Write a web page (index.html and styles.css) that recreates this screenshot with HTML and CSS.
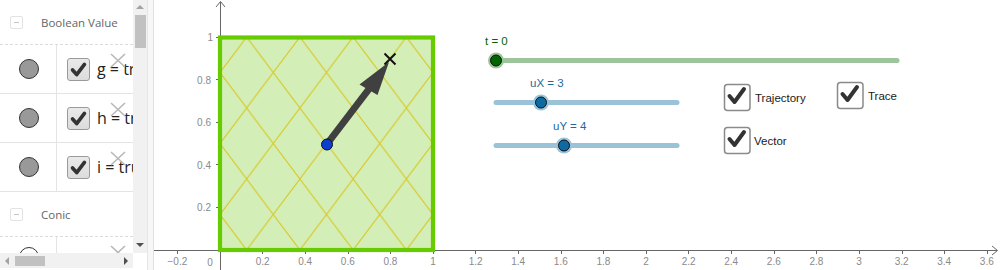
FILE: index.html
```html
<!DOCTYPE html>
<html>
<head>
<meta charset="utf-8">
<link rel="stylesheet" href="styles.css">
</head>
<body>
<div class="app">
  <div class="algebra">
    <div class="av-main">
      <div class="av-list">
        <div class="group-head"><span class="toggle"></span><span class="gname">Boolean Value</span></div>
        <div class="item">
          <div class="marble"><span class="dot"></span></div>
          <div class="def">
            <span class="cb"><svg viewBox="0 0 23 23" width="23" height="23"><path d="M5 12 L9.5 17 L18 6" fill="none" stroke="#333" stroke-width="4" stroke-linecap="round" stroke-linejoin="round"/></svg></span>
            <span class="txt">g = true</span>
            <svg class="del" viewBox="0 0 16 15" width="16" height="15"><path d="M1 1 L15 14 M15 1 L1 14" stroke="#b8b8b8" stroke-width="1.6"/></svg>
          </div>
        </div>
        <div class="item">
          <div class="marble"><span class="dot"></span></div>
          <div class="def">
            <span class="cb"><svg viewBox="0 0 23 23" width="23" height="23"><path d="M5 12 L9.5 17 L18 6" fill="none" stroke="#333" stroke-width="4" stroke-linecap="round" stroke-linejoin="round"/></svg></span>
            <span class="txt">h = true</span>
            <svg class="del" viewBox="0 0 16 15" width="16" height="15"><path d="M1 1 L15 14 M15 1 L1 14" stroke="#b8b8b8" stroke-width="1.6"/></svg>
          </div>
        </div>
        <div class="item">
          <div class="marble"><span class="dot"></span></div>
          <div class="def">
            <span class="cb"><svg viewBox="0 0 23 23" width="23" height="23"><path d="M5 12 L9.5 17 L18 6" fill="none" stroke="#333" stroke-width="4" stroke-linecap="round" stroke-linejoin="round"/></svg></span>
            <span class="txt">i = true</span>
            <svg class="del" viewBox="0 0 16 15" width="16" height="15"><path d="M1 1 L15 14 M15 1 L1 14" stroke="#b8b8b8" stroke-width="1.6"/></svg>
          </div>
        </div>
        <div class="group-head"><span class="toggle"></span><span class="gname">Conic</span></div>
        <div class="item">
          <div class="marble"><span class="dot hollow"></span></div>
          <div class="def">
            <svg class="del" viewBox="0 0 16 15" width="16" height="15"><path d="M1 1 L15 14 M15 1 L1 14" stroke="#b8b8b8" stroke-width="1.6"/></svg>
          </div>
        </div>
      </div>
      <div class="vscroll">
        <span class="arr up"></span>
        <span class="vthumb"></span>
        <span class="vspace"></span>
        <span class="arr down"></span>
      </div>
    </div>
    <div class="hscroll">
      <span class="arr left"></span>
      <span class="hthumb"></span>
      <span class="hspace"></span>
      <span class="arr right"></span>
    </div>
  </div>
  <div class="splitter"></div>
  <svg class="graphics" viewBox="154 0 846 270" width="846" height="270">
    <defs>
      <pattern id="hatch" patternUnits="userSpaceOnUse" x="246.625" y="37" width="53.25" height="71">
        <path d="M0 0 L53.25 71 M53.25 0 L0 71 M-53.25 0 L0 71 M53.25 71 L106.5 0" stroke="#d8c82a" stroke-width="1.1" fill="none"/>
      </pattern>
    </defs>
    <rect x="220" y="37" width="213" height="213" fill="#d3efb7"/>
    <rect x="220" y="37" width="213" height="213" fill="url(#hatch)"/>
    <g stroke="#666" stroke-width="1" fill="none">
      <line x1="154" y1="250.5" x2="997" y2="250.5"/>
      <path d="M992 246 L997.5 250.5 L992 255"/>
      <line x1="220.5" y1="270" x2="220.5" y2="2"/>
      <path d="M216 7 L220.5 1.5 L225 7"/>
      <path d="M177.5 250 v4 M262.5 250 v4 M305.5 250 v4 M348.5 250 v4 M390.5 250 v4 M433.5 250 v4 M475.5 250 v4 M518.5 250 v4 M561.5 250 v4 M603.5 250 v4 M646.5 250 v4 M688.5 250 v4 M731.5 250 v4 M774.5 250 v4 M816.5 250 v4 M859.5 250 v4 M902.5 250 v4 M944.5 250 v4 M987.5 250 v4"/>
      <path d="M216 37.5 h4 M216 79.5 h4 M216 122.5 h4 M216 164.5 h4 M216 207.5 h4"/>
    </g>
    <g class="ax-label" text-anchor="middle">
      <text x="177.4" y="265">−0.2</text>
      <text x="210" y="266">0</text>
      <text x="262.6" y="265">0.2</text>
      <text x="305.2" y="265">0.4</text>
      <text x="347.8" y="265">0.6</text>
      <text x="390.4" y="265">0.8</text>
      <text x="433" y="265">1</text>
      <text x="475.6" y="265">1.2</text>
      <text x="518.2" y="265">1.4</text>
      <text x="560.8" y="265">1.6</text>
      <text x="603.4" y="265">1.8</text>
      <text x="646" y="265">2</text>
      <text x="688.6" y="265">2.2</text>
      <text x="731.2" y="265">2.4</text>
      <text x="773.8" y="265">2.6</text>
      <text x="816.4" y="265">2.8</text>
      <text x="859" y="265">3</text>
      <text x="901.6" y="265">3.2</text>
      <text x="944.2" y="265">3.4</text>
      <text x="986.8" y="265">3.6</text>
    </g>
    <g class="ax-label" text-anchor="end">
      <text x="213" y="41">1</text>
      <text x="211" y="83.6">0.8</text>
      <text x="211" y="126.2">0.6</text>
      <text x="211" y="168.8">0.4</text>
      <text x="211" y="211.4">0.2</text>
    </g>
    <rect x="220" y="37.5" width="213" height="212.5" fill="none" stroke="#66cc00" stroke-width="4.2"/>
    <line x1="327" y1="144" x2="369" y2="89" stroke="#404040" stroke-width="7"/>
    <polygon points="389,62 359.5,84.5 377.5,95" fill="#404040"/>
    <path d="M384.5 53.5 L395.5 64.5 M395.5 53.5 L384.5 64.5" stroke="#111" stroke-width="2"/>
    <circle cx="327" cy="144.5" r="5.5" fill="#0b3fd0" stroke="#111" stroke-width="1"/>
    <text class="sl-label green" x="485" y="45">t = 0</text>
    <line x1="496" y1="60.5" x2="897" y2="60.5" stroke="#9dc49a" stroke-width="5" stroke-linecap="round"/>
    <circle cx="496" cy="60.5" r="8" fill="#9dc49a"/>
    <circle cx="496" cy="60.5" r="5.5" fill="#006400" stroke="#111" stroke-width="1"/>
    <text class="sl-label blue" x="530" y="87">uX = 3</text>
    <line x1="496" y1="102.5" x2="677" y2="102.5" stroke="#9ac3d8" stroke-width="5" stroke-linecap="round"/>
    <circle cx="541" cy="102.5" r="8" fill="#9ac3d8"/>
    <circle cx="541" cy="102.5" r="5.5" fill="#0e6aa3" stroke="#111" stroke-width="1"/>
    <text class="sl-label blue" x="553" y="130">uY = 4</text>
    <line x1="496" y1="145.5" x2="677" y2="145.5" stroke="#9ac3d8" stroke-width="5" stroke-linecap="round"/>
    <circle cx="564" cy="145.5" r="8" fill="#9ac3d8"/>
    <circle cx="564" cy="145.5" r="5.5" fill="#0e6aa3" stroke="#111" stroke-width="1"/>
    <g>
      <rect x="724.5" y="84.5" width="25.5" height="26" rx="3" fill="#fff" stroke="#8a8a8a" stroke-width="1.5"/>
      <path d="M729.5 96 L734.5 102 L744 89" fill="none" stroke="#333" stroke-width="4" stroke-linecap="round" stroke-linejoin="round"/>
      <text class="cb-label" x="755" y="102">Trajectory</text>
    </g>
    <g>
      <rect x="837.5" y="82.5" width="25.5" height="26" rx="3" fill="#fff" stroke="#8a8a8a" stroke-width="1.5"/>
      <path d="M842.5 94 L847.5 100 L857 87" fill="none" stroke="#333" stroke-width="4" stroke-linecap="round" stroke-linejoin="round"/>
      <text class="cb-label" x="868" y="100">Trace</text>
    </g>
    <g>
      <rect x="724.5" y="127.5" width="25.5" height="26" rx="3" fill="#fff" stroke="#8a8a8a" stroke-width="1.5"/>
      <path d="M729.5 139 L734.5 145 L744 132" fill="none" stroke="#333" stroke-width="4" stroke-linecap="round" stroke-linejoin="round"/>
      <text class="cb-label" x="754" y="145">Vector</text>
    </g>
  </svg>
</div>
</body>
</html>
```

FILE: styles.css
```css
html, body {
  margin: 0;
  padding: 0;
  background: #fff;
  overflow: hidden;
}
.app {
  display: flex;
  width: 1000px;
  height: 270px;
  font-family: "Open Sans", "Liberation Sans", sans-serif;
}
.algebra {
  width: 147px;
  height: 270px;
  display: flex;
  flex-direction: column;
  flex: none;
}
.av-main {
  display: flex;
  height: 253px;
}
.av-list {
  width: 133px;
  overflow: hidden;
  flex: none;
}
.group-head {
  height: 45px;
  border-bottom: 1px dashed #dcdcdc;
  display: flex;
  align-items: center;
  box-sizing: border-box;
  padding-left: 10px;
  padding-top: 1px;
  color: #666;
  font-size: 11.5px;
}
.toggle {
  width: 11px;
  height: 11px;
  border: 1px solid #e3e3e3;
  border-radius: 2px;
  position: relative;
  margin-right: 18px;
  flex: none;
}
.toggle::after {
  content: "";
  position: absolute;
  left: 3px;
  top: 5px;
  width: 5px;
  height: 1px;
  background: #c8c8c8;
}
.gname { white-space: nowrap; }
.item {
  display: flex;
  height: 49px;
  border-bottom: 1px solid #e4e4e4;
  box-sizing: border-box;
}
.marble {
  width: 57px;
  border-right: 1px solid #e4e4e4;
  display: flex;
  align-items: center;
  justify-content: center;
  flex: none;
  box-sizing: border-box;
}
.dot {
  width: 18px;
  height: 18px;
  border-radius: 50%;
  background: #999;
  border: 1px solid #333;
  margin-left: 1px;
}
.dot.hollow {
  background: #fff;
  align-self: flex-start;
  margin-top: 10px;
}
.def {
  position: relative;
  display: flex;
  align-items: center;
  padding-left: 10px;
  white-space: nowrap;
  flex: 1;
  overflow: hidden;
}
.cb {
  width: 23px;
  height: 23px;
  box-sizing: border-box;
  border: 1px solid #9a9a9a;
  border-radius: 3px;
  background: linear-gradient(#eaeaea, #dcdcdc);
  display: flex;
  align-items: center;
  justify-content: center;
  margin-right: 7px;
  flex: none;
}
.cb svg { display: block; }
.txt {
  font-size: 16px;
  color: #222;
}
.del {
  position: absolute;
  left: 53px;
  top: 8px;
}
.vscroll {
  width: 14px;
  background: #f1f1f1;
  display: flex;
  flex-direction: column;
  align-items: center;
}
.vthumb {
  width: 11px;
  height: 33px;
  background: #c1c1c1;
  margin-top: 1px;
}
.vspace { flex: 1; }
.arr {
  width: 0;
  height: 0;
  border-style: solid;
  display: block;
}
.arr.up {
  margin-top: 5px;
  border-width: 0 4px 4px 4px;
  border-color: transparent transparent #a3a3a3 transparent;
  margin-bottom: 5px;
}
.arr.down {
  margin-bottom: 6px;
  border-width: 4px 4px 0 4px;
  border-color: #505050 transparent transparent transparent;
}
.hscroll {
  width: 133px;
  height: 15px;
  background: #f1f1f1;
  display: flex;
  align-items: center;
}
.arr.left {
  margin-left: 5px;
  border-width: 4px 4px 4px 0;
  border-color: transparent #a3a3a3 transparent transparent;
  margin-right: 5px;
}
.hthumb {
  width: 30px;
  height: 10px;
  background: #c1c1c1;
  margin-left: 1px;
}
.hspace { flex: 1; }
.arr.right {
  margin-right: 5px;
  border-width: 4px 0 4px 4px;
  border-color: transparent transparent transparent #505050;
}
.splitter {
  width: 5px;
  flex: none;
  background: #f7f7f7;
  border-left: 1px solid #e6e6e6;
  border-right: 1px solid #e0e0e0;
}
.graphics {
  display: block;
  flex: none;
}
.ax-label {
  font-family: "Liberation Sans", Arial, sans-serif;
  font-size: 10px;
  fill: #8a8a8a;
}
.sl-label {
  font-family: "Liberation Sans", Arial, sans-serif;
  font-size: 11.5px;
}
.sl-label.green { fill: #006400; }
.sl-label.blue { fill: #1c6a9c; }
.cb-label {
  font-family: "Liberation Sans", Arial, sans-serif;
  font-size: 11.5px;
  fill: #1a1a1a;
}
```
